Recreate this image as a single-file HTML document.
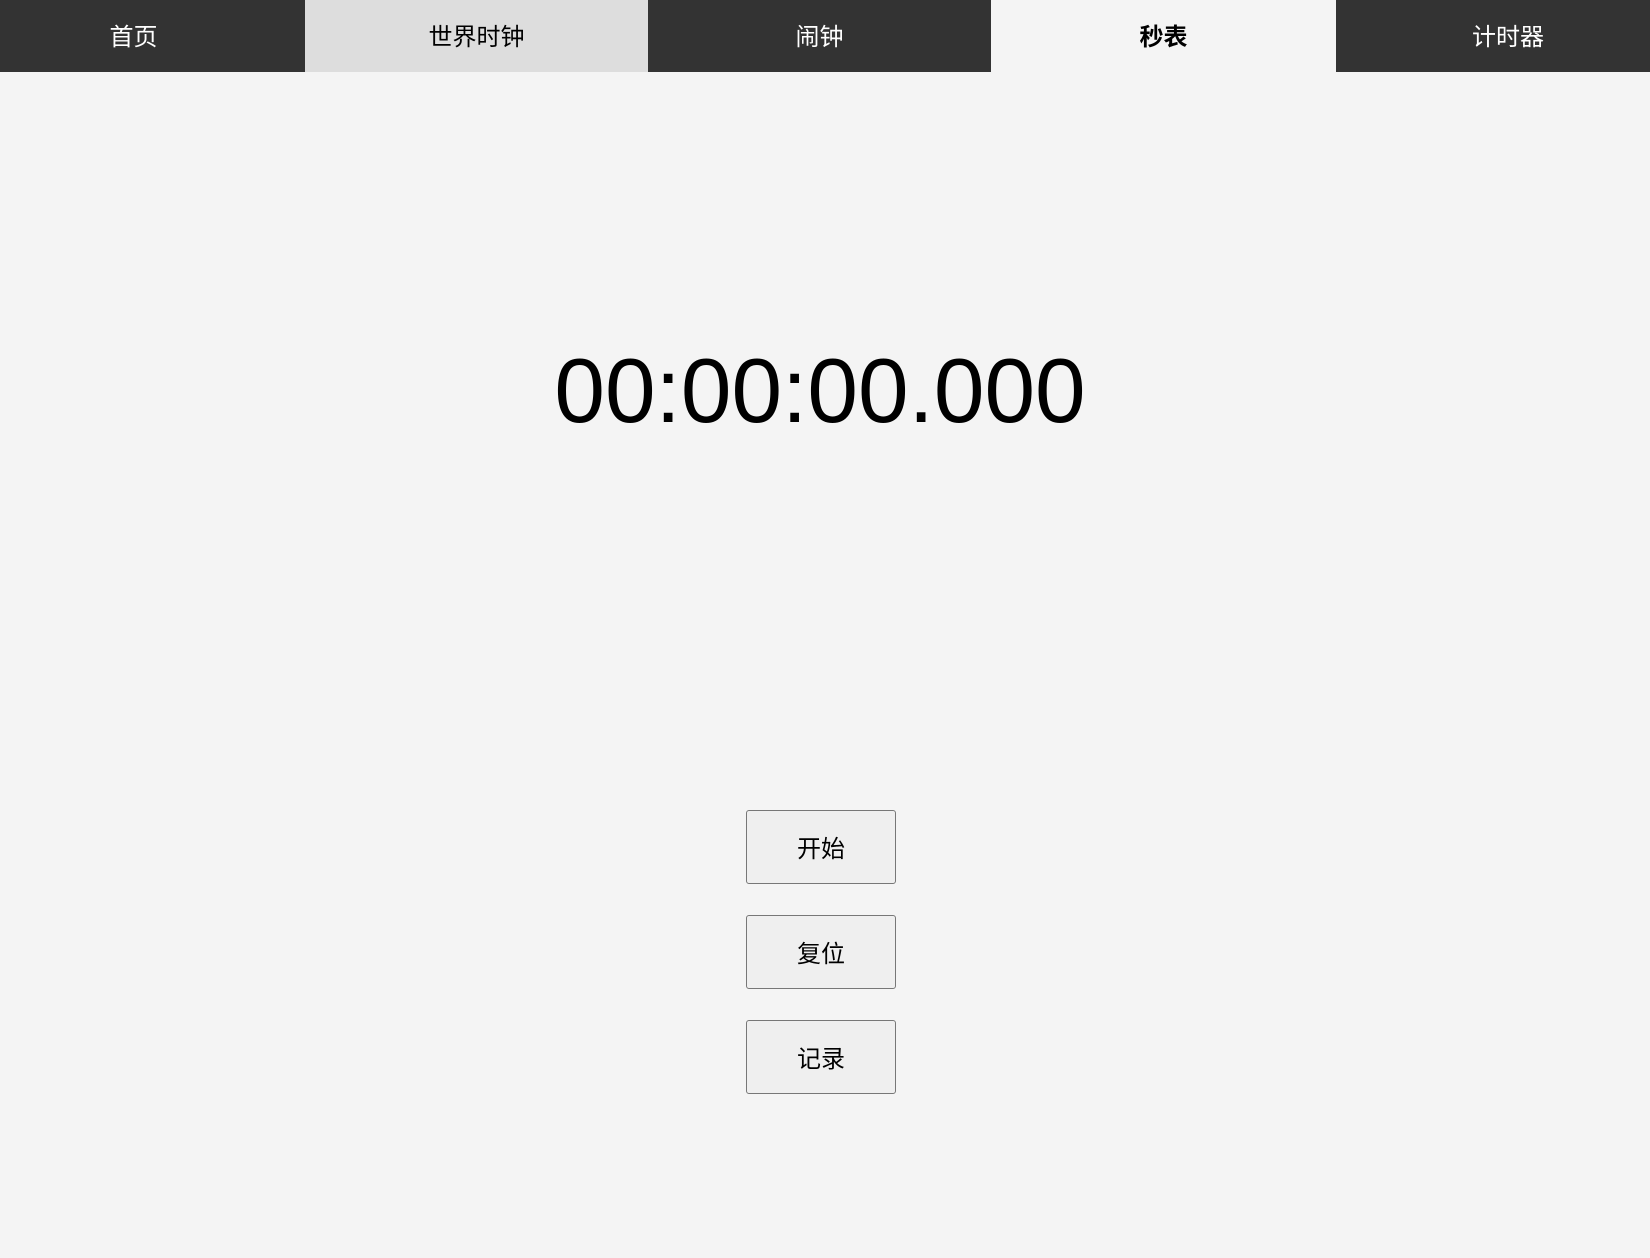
<!DOCTYPE html>
<html><head><meta charset="utf-8"><style>
html,body{margin:0;padding:0;width:1650px;height:1258px;overflow:hidden;background:#f4f4f4;font-family:"Liberation Sans","Noto Sans CJK SC",sans-serif;}
.tab{position:absolute;top:0;height:72px;line-height:76px;text-align:center;font-size:24px;}
.d{background:#333;color:#fff}
.l{background:#ddd;color:#000}
.a{background:#f4f4f4;color:#000;font-weight:bold}
.t{position:absolute;left:0;width:1640px;top:332px;text-align:center;font-size:91px;line-height:120px;color:#000}
.b{position:absolute;left:746px;width:148px;height:72px;border:1px solid #777;border-radius:3px;background:#efefef;font-size:24px;line-height:78px;text-align:center;color:#000}
</style></head><body>
<div class="tab d" style="left:0;width:305px"><span style="position:relative;left:-19px">首页</span></div>
<div class="tab l" style="left:305px;width:343px">世界时钟</div>
<div class="tab d" style="left:648px;width:343px">闹钟</div>
<div class="tab a" style="left:991px;width:345px">秒表</div>
<div class="tab d" style="left:1336px;width:314px"><span style="position:relative;left:15px">计时器</span></div>
<div class="t">00:00:00.000</div>
<div class="b" style="top:810px">开始</div>
<div class="b" style="top:915px">复位</div>
<div class="b" style="top:1020px">记录</div>
</body></html>
